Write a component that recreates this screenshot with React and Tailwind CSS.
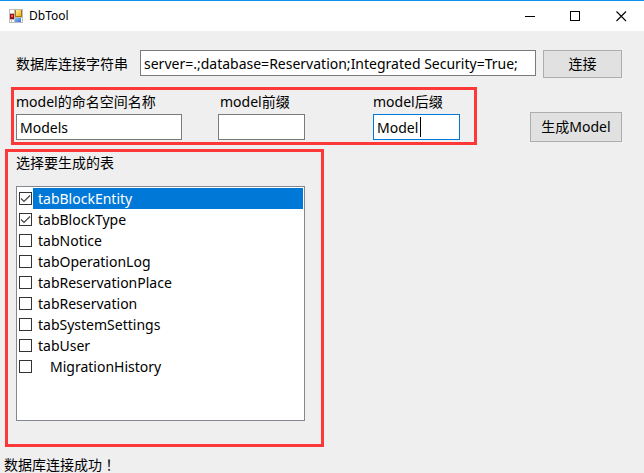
const tables = [
  { name: "tabBlockEntity", checked: true, selected: true },
  { name: "tabBlockType", checked: true },
  { name: "tabNotice" },
  { name: "tabOperationLog" },
  { name: "tabReservationPlace" },
  { name: "tabReservation" },
  { name: "tabSystemSettings" },
  { name: "tabUser" },
  { name: "MigrationHistory", indent: true },
];

const fieldClass =
  "block h-[26px] border bg-white px-[3px] text-[14px] leading-6 text-black outline-none";

function AppIcon() {
  return (
    <svg width="14" height="14" viewBox="0 0 14 14" shapeRendering="crispEdges" aria-hidden="true">
      <defs>
        <linearGradient id="gold" x1="0" y1="0" x2="1" y2="1">
          <stop offset="0" stopColor="#fff0a0" />
          <stop offset="1" stopColor="#f0b010" />
        </linearGradient>
        <linearGradient id="sky" x1="0" y1="0" x2="1" y2="1">
          <stop offset="0" stopColor="#90c0f8" />
          <stop offset="1" stopColor="#3070d8" />
        </linearGradient>
      </defs>
      <rect width="14" height="14" fill="#bdbdbd" />
      <path d="M1 1h4v3H1zM1 11h1v2H1zM3 11h2v2H3zM12 9h1v4h-1z" fill="#fff" />
      <rect x="6" y="1" width="7" height="7" fill="#a87808" />
      <rect x="7" y="1" width="5" height="6" fill="url(#gold)" />
      <rect x="1" y="5" width="4" height="5" fill="#9c1010" />
      <rect x="2" y="6" width="2" height="2" fill="#f06050" />
      <rect x="6" y="9" width="6" height="4" fill="url(#sky)" />
    </svg>
  );
}

function TitleBar() {
  const control = "flex h-full w-[45px] items-center justify-center";
  return (
    <header className="flex h-[31px] items-center border-t border-[#0c91ee] bg-white pl-[9px]">
      <AppIcon />
      <h1 className="ml-[6px] flex-1 text-[12px] leading-4">DbTool</h1>
      <button type="button" aria-label="最小化" className={control}>
        <svg width="13" height="11" shapeRendering="crispEdges">
          <path d="M0 5h10v1H0z" />
        </svg>
      </button>
      <button type="button" aria-label="最大化" className={control}>
        <svg width="13" height="11" shapeRendering="crispEdges">
          <path d="M0.5 0.5h9v9h-9z" fill="none" stroke="#000" />
        </svg>
      </button>
      <button type="button" aria-label="关闭" className={control}>
        <svg width="11" height="11">
          <path d="M0.5 0.5l9.5 9.5M10 0.5l-9.5 9.5" fill="none" stroke="#000" strokeWidth="1.1" />
        </svg>
      </button>
    </header>
  );
}

function TableRow({ table }) {
  return (
    <li>
      <label className="flex h-[21px] items-center">
        <span className="relative ml-px flex w-[14px] shrink-0">
          <input
            type="checkbox"
            defaultChecked={table.checked}
            className="peer size-[13px] appearance-none border border-[#333333] bg-white"
          />
          <svg
            width="13"
            height="13"
            className="pointer-events-none invisible absolute top-0 left-0 peer-checked:visible"
          >
            <path d="M2 6.5l3 3 6-6" fill="none" stroke="#444" strokeWidth="1.2" />
          </svg>
        </span>
        <span
          className={
            "h-full flex-1 text-[14px] leading-[21px] " +
            (table.selected ? "bg-[#0078d7] text-white " : "") +
            (table.indent ? "pl-[17px]" : "pl-[5px]")
          }
        >
          {table.name}
        </span>
      </label>
    </li>
  );
}

export default function App() {
  return (
    <div className="min-h-screen bg-[#efefef] font-['Noto_Sans','Noto_Sans_CJK_SC',sans-serif] text-[14px] text-black">
      <TitleBar />
      <main className="pt-[19px]">
        <div className="flex items-start pr-[22px] pl-4">
          <label htmlFor="conn" className="w-[124px] shrink-0 leading-7">
            数据库连接字符串
          </label>
          <input
            id="conn"
            type="text"
            defaultValue="server=.;database=Reservation;Integrated Security=True;"
            className={fieldClass + " min-w-0 flex-1 border-[#7a7a7a]"}
          />
          <button
            type="button"
            className="ml-[7px] h-7 w-[79px] shrink-0 border border-[#adadad] bg-[#e1e1e1] leading-6"
          >
            连接
          </button>
        </div>

        <div className="mt-[9px] flex items-start justify-between pr-[22px] pl-[11px]">
          <section className="flex border-[3px] border-[#fd3838] pr-[14px] pb-[2px] pl-[2px]">
            <div className="w-[166px]">
              <label htmlFor="ns" className="block leading-6">
                model的命名空间名称
              </label>
              <input
                id="ns"
                type="text"
                defaultValue="Models"
                className={fieldClass + " w-full border-[#7a7a7a]"}
              />
            </div>
            <div className="ml-9 w-[87px]">
              <label htmlFor="prefix" className="block pl-[2px] leading-6">
                model前缀
              </label>
              <input id="prefix" type="text" className={fieldClass + " w-full border-[#7a7a7a]"} />
            </div>
            <div className="ml-[68px] w-[87px]">
              <label htmlFor="suffix" className="block leading-6">
                model后缀
              </label>
              <div className="relative">
                <input
                  id="suffix"
                  type="text"
                  defaultValue="Model"
                  className={fieldClass + " w-full border-[#0078d7]"}
                />
                <span className="absolute top-[3px] left-[47px] h-5 w-px bg-black" />
              </div>
            </div>
          </section>
          <button
            type="button"
            className="mt-[25px] h-[30px] w-[92px] border border-[#adadad] bg-[#e1e1e1] leading-6"
          >
            生成Model
          </button>
        </div>

        <section className="mt-1 ml-[5px] w-[319px] border-[3px] border-[#fd3838] px-2 pb-[23px]">
          <h2 className="leading-[22px]">选择要生成的表</h2>
          <ul className="mt-3 h-[235px] w-[289px] border border-[#828790] bg-white p-px">
            {tables.map((table) => (
              <TableRow key={table.name} table={table} />
            ))}
          </ul>
        </section>
      </main>
      <footer className="pt-2 pl-1 leading-[18px]">
        数据库连接成功<span className="font-['Noto_Sans_CJK_TC',sans-serif]" lang="zh-TW">！</span>
      </footer>
    </div>
  );
}
